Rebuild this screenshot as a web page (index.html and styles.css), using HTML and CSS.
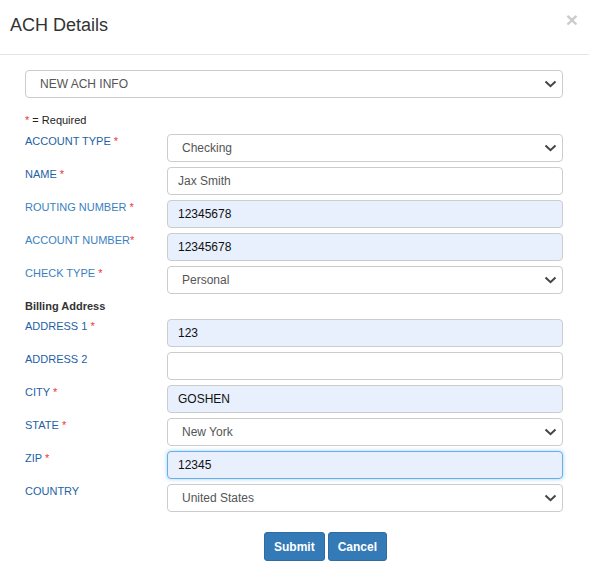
FILE: index.html
```html
<!DOCTYPE html>
<html>
<head>
<meta charset="utf-8">
<link rel="stylesheet" href="styles.css">
</head>
<body>
<div class="modal">
  <div class="modal-header">
    <h4 class="modal-title">ACH Details</h4>
    <span class="close">&times;</span>
  </div>
  <div class="modal-body">
    <div class="select-wrap top-select">
      <select class="field select"><option>NEW ACH INFO</option></select>
      <svg class="chev" width="13" height="8" viewBox="0 0 13 8"><path d="M1.5 1.5 L6.5 6.2 L11.5 1.5" fill="none" stroke="#444" stroke-width="2"/></svg>
    </div>
    <div class="required"><span class="star">*</span> = Required</div>
    <div class="form-grid">
      <label class="lbl dark">ACCOUNT TYPE <span class="star">*</span></label>
      <div class="select-wrap">
        <select class="field select"><option>Checking</option></select>
        <svg class="chev" width="13" height="8" viewBox="0 0 13 8"><path d="M1.5 1.5 L6.5 6.2 L11.5 1.5" fill="none" stroke="#444" stroke-width="2"/></svg>
      </div>

      <label class="lbl dark">NAME <span class="star">*</span></label>
      <input class="field input" value="Jax Smith">

      <label class="lbl light">ROUTING NUMBER <span class="star">*</span></label>
      <input class="field input filled" value="12345678">

      <label class="lbl light">ACCOUNT NUMBER<span class="star">*</span></label>
      <input class="field input filled" value="12345678">

      <label class="lbl light">CHECK TYPE <span class="star">*</span></label>
      <div class="select-wrap">
        <select class="field select"><option>Personal</option></select>
        <svg class="chev" width="13" height="8" viewBox="0 0 13 8"><path d="M1.5 1.5 L6.5 6.2 L11.5 1.5" fill="none" stroke="#444" stroke-width="2"/></svg>
      </div>

      <div class="section">Billing Address</div>

      <label class="lbl dark">ADDRESS 1 <span class="star">*</span></label>
      <input class="field input filled" value="123">

      <label class="lbl dark">ADDRESS 2</label>
      <input class="field input" value="">

      <label class="lbl dark">CITY <span class="star">*</span></label>
      <input class="field input filled" value="GOSHEN">

      <label class="lbl dark">STATE <span class="star">*</span></label>
      <div class="select-wrap">
        <select class="field select"><option>New York</option></select>
        <svg class="chev" width="13" height="8" viewBox="0 0 13 8"><path d="M1.5 1.5 L6.5 6.2 L11.5 1.5" fill="none" stroke="#444" stroke-width="2"/></svg>
      </div>

      <label class="lbl dark">ZIP <span class="star">*</span></label>
      <input class="field input filled focus" value="12345">

      <label class="lbl dark">COUNTRY</label>
      <div class="select-wrap">
        <select class="field select"><option>United States</option></select>
        <svg class="chev" width="13" height="8" viewBox="0 0 13 8"><path d="M1.5 1.5 L6.5 6.2 L11.5 1.5" fill="none" stroke="#444" stroke-width="2"/></svg>
      </div>
    </div>
    <div class="actions">
      <button class="btn">Submit</button>
      <button class="btn">Cancel</button>
    </div>
  </div>
</div>
</body>
</html>
```

FILE: styles.css
```css
* { box-sizing: border-box; }
html, body { margin: 0; padding: 0; background: #fff; }
body {
  font-family: "Liberation Sans", Arial, sans-serif;
  color: #333;
  width: 589px;
}
.modal { width: 589px; }
.modal-header {
  height: 55px;
  border-bottom: 1px solid #e5e5e5;
  display: flex;
  align-items: flex-start;
  justify-content: space-between;
  padding: 0 10px 0 10px;
}
.modal-title {
  margin: 0;
  padding-top: 13px;
  font-size: 18px;
  font-weight: normal;
  line-height: 24px;
  color: #333;
}
.close {
  margin-top: 8px;
  margin-right: 1px;
  font-size: 21px;
  font-weight: bold;
  line-height: 24px;
  color: #000;
  opacity: 0.2;
}
.modal-body {
  padding: 15px 26px 0 25px;
}
.select-wrap { position: relative; }
.chev {
  position: absolute;
  right: 6px;
  top: 50%;
  margin-top: -4px;
  pointer-events: none;
}
.field {
  display: block;
  width: 100%;
  height: 28px;
  border: 1px solid #ccc;
  border-radius: 4px;
  font-family: "Liberation Sans", Arial, sans-serif;
  font-size: 12px;
  color: #555;
  background: #fff;
  margin: 0;
  outline: none;
}
.select {
  -webkit-appearance: none;
  appearance: none;
  padding: 0 30px 0 14px;
}
.input {
  padding: 0 10px;
}
.filled {
  background: #e8f0fe;
  color: #111;
}
.focus {
  border-color: #66afe9;
  box-shadow: 0 0 4px rgba(102, 175, 233, 0.6);
}
.required {
  font-size: 11px;
  color: #222;
  margin-top: 16px;
  line-height: 13px;
}
.star { color: #e33; }
.form-grid {
  margin-top: 7px;
  display: grid;
  grid-template-columns: 142px 396px;
  row-gap: 5px;
}
.lbl {
  font-size: 11px;
  line-height: 13px;
  padding-top: 1px;
}
.lbl.dark { color: #1e5fa5; }
.lbl.light { color: #3a7fc1; }
.section {
  grid-column: 1 / 3;
  font-size: 11px;
  font-weight: bold;
  color: #333;
  line-height: 15px;
}
.actions {
  display: flex;
  gap: 3px;
  margin-top: 20px;
  padding-left: 239px;
}
.btn {
  height: 29px;
  padding: 0 9px;
  border: 1px solid #2e6da4;
  border-radius: 3px;
  background: #337ab7;
  color: #fff;
  font-family: "Liberation Sans", Arial, sans-serif;
  font-size: 12px;
  font-weight: bold;
}
```
